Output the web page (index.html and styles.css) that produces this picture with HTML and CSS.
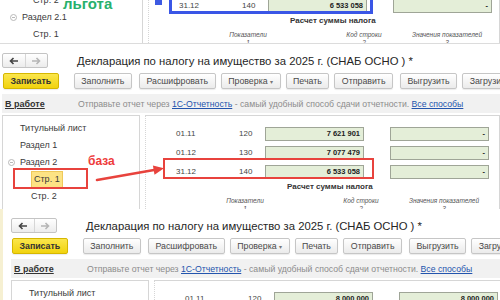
FILE: index.html
```html
<!DOCTYPE html>
<html lang="ru">
<head>
    <meta charset="UTF-8">
    <meta name="viewport" content="width=device-width, initial-scale=1.0">
    <title>Декларация по налогу на имущество</title>
    <link rel="stylesheet" href="styles.css">
</head>
<body>
<div class="page">

    <!-- Верхний снимок: льгота -->
    <div class="shot shot-top">
        <div class="panels panels-cut">
            <ul class="tree">
                <li class="node leaf">Стр. 2</li>
                <li class="node"><span class="toggle"></span>Раздел 2.1</li>
                <li class="node leaf">Стр. 1</li>
            </ul>
            <div class="sheet">
                <div class="row">
                    <span class="date">31.12</span>
                    <span class="code">140</span>
                    <span class="field">6 533 058</span>
                    <span class="field">-</span>
                </div>
                <div class="caption">Расчет суммы налога</div>
                <div class="cols">
                    <span class="col col-a">Показатели<br>1</span>
                    <span class="col col-b">Код строки<br>2</span>
                    <span class="col col-c">Значения показателей<br>3</span>
                </div>
            </div>
        </div>
        <span class="note note-green">льгота</span>
        <div class="frame frame-blue"></div>
        <div class="blue-tip"></div>
    </div>

    <!-- Средний снимок: база -->
    <div class="shot shot-mid">
        <div class="form">
            <div class="head">
                <div class="nav">
                    <span class="nav-btn">
                        <svg width="10" height="8" viewBox="0 0 10 8"><path d="M9 4H1.5M4.5 1L1.5 4l3 3" fill="none" stroke="#444" stroke-width="1.6"/></svg>
                    </span>
                    <span class="nav-btn">
                        <svg width="10" height="8" viewBox="0 0 10 8"><path d="M1 4h7.5M5.5 1l3 3-3 3" fill="none" stroke="#b5b5b5" stroke-width="1.6"/></svg>
                    </span>
                </div>
                <h1 class="title">Декларация по налогу на имущество за 2025 г. (СНАБ ОСНО ) *</h1>
            </div>
            <div class="toolbar">
                <span class="btn btn-main">Записать</span>
                <span class="btn btn-wide">Заполнить</span>
                <span class="btn">Расшифровать</span>
                <span class="btn">Проверка <span class="caret">▾</span></span>
                <span class="btn">Печать</span>
                <span class="btn btn-wide">Отправить</span>
                <span class="btn">Выгрузить</span>
                <span class="btn">Загрузить</span>
            </div>
            <div class="info">
                <span class="status">В работе</span>
                <span>Отправьте отчет через <a href="#">1С-Отчетность</a> - самый удобный способ сдачи отчетности. <a href="#">Все способы</a></span>
            </div>
            <div class="panels">
                <ul class="tree">
                    <li class="node">Титульный лист</li>
                    <li class="node">Раздел 1</li>
                    <li class="node"><span class="toggle"></span>Раздел 2</li>
                    <li class="node leaf"><span class="selected">Стр. 1</span></li>
                    <li class="node leaf">Стр. 2</li>
                </ul>
                <div class="sheet">
                    <div class="row">
                        <span class="date">01.11</span>
                        <span class="code">120</span>
                        <span class="field">7 621 901</span>
                        <span class="field">-</span>
                    </div>
                    <div class="row">
                        <span class="date">01.12</span>
                        <span class="code">130</span>
                        <span class="field">7 077 479</span>
                        <span class="field">-</span>
                    </div>
                    <div class="row">
                        <span class="date">31.12</span>
                        <span class="code">140</span>
                        <span class="field">6 533 058</span>
                        <span class="field">-</span>
                    </div>
                    <div class="caption">Расчет суммы налога</div>
                    <div class="cols">
                        <span class="col col-a">Показатели<br>1</span>
                        <span class="col col-b">Код строки<br>2</span>
                        <span class="col col-c">Значения показателей<br>3</span>
                    </div>
                </div>
            </div>
        </div>
        <div class="frame frame-tree"></div>
        <div class="frame frame-row"></div>
        <span class="note note-red">база</span>
        <svg class="arrow" width="500" height="165" viewBox="0 0 500 165">
            <path d="M97 136L154 126" stroke="#e8433d" stroke-width="2.6" stroke-linecap="round"/>
            <path d="M164 124.3L152.9 121.6L154.5 130.7Z" fill="#e8433d"/>
        </svg>
    </div>

    <!-- Нижний снимок -->
    <div class="shot shot-bottom">
        <div class="form">
            <div class="head">
                <div class="nav">
                    <span class="nav-btn">
                        <svg width="10" height="8" viewBox="0 0 10 8"><path d="M9 4H1.5M4.5 1L1.5 4l3 3" fill="none" stroke="#444" stroke-width="1.6"/></svg>
                    </span>
                    <span class="nav-btn">
                        <svg width="10" height="8" viewBox="0 0 10 8"><path d="M1 4h7.5M5.5 1l3 3-3 3" fill="none" stroke="#b5b5b5" stroke-width="1.6"/></svg>
                    </span>
                </div>
                <h1 class="title">Декларация по налогу на имущество за 2025 г. (СНАБ ОСНО ) *</h1>
            </div>
            <div class="toolbar">
                <span class="btn btn-main">Записать</span>
                <span class="btn btn-wide">Заполнить</span>
                <span class="btn">Расшифровать</span>
                <span class="btn">Проверка <span class="caret">▾</span></span>
                <span class="btn">Печать</span>
                <span class="btn btn-wide">Отправить</span>
                <span class="btn">Выгрузить</span>
                <span class="btn">Загрузить</span>
            </div>
            <div class="info">
                <span class="status">В работе</span>
                <span>Отправьте отчет через <a href="#">1С-Отчетность</a> - самый удобный способ сдачи отчетности. <a href="#">Все способы</a></span>
            </div>
            <div class="panels">
                <ul class="tree">
                    <li class="node">Титульный лист</li>
                </ul>
                <div class="sheet">
                    <div class="row">
                        <span class="date">01.11</span>
                        <span class="code">120</span>
                        <span class="field">8 000 000</span>
                        <span class="field">8 000 000</span>
                    </div>
                </div>
            </div>
        </div>
    </div>

</div>
</body>
</html>
```

FILE: styles.css
```css
* {
    box-sizing: border-box;
}
body {
    margin: 0;
    background-color: #fff;
    font-family: "Liberation Sans", Arial, sans-serif;
    color: #333;
}
.page {
    width: 500px;
    height: 300px;
    overflow: hidden;
}
.shot {
    position: relative;
    overflow: hidden;
}
.shot-top {
    height: 44px;
    border-bottom: 1px solid #dcdcdc;
}
.shot-mid {
    height: 165px;
}
.shot-bottom {
    height: 91px;
    padding-left: 6px;
    border-left: 3px solid #f6f0d2;
}
.form {
    width: 500px;
}

/* header */
.head {
    display: flex;
    align-items: center;
    padding: 9px 0 0 2px;
}
.nav {
    display: flex;
    width: 46px;
    height: 15px;
    border: 1px solid #c4c4c4;
    border-radius: 2px;
    background: linear-gradient(#fff, #ececec);
}
.nav-btn {
    flex: 1;
    display: flex;
    align-items: center;
    justify-content: center;
}
.nav-btn + .nav-btn {
    border-left: 1px solid #d6d6d6;
}
.title {
    margin: 0 0 0 29px;
    font-size: 11.3px;
    font-weight: normal;
    line-height: 14px;
    color: #262626;
    white-space: nowrap;
}

/* toolbar */
.toolbar {
    display: flex;
    gap: 5px;
    margin-top: 5px;
    padding-left: 3px;
}
.btn {
    height: 16px;
    padding: 0 6.5px;
    border: 1px solid #c6c6c6;
    border-radius: 2px;
    background: linear-gradient(#fff, #ebebeb);
    box-shadow: 0 1px 1px rgba(0, 0, 0, 0.08);
    font-size: 8.8px;
    line-height: 14px;
    color: #4a4a4a;
    white-space: nowrap;
}
.btn-main {
    margin-right: 10px;
    background: linear-gradient(#fbe64c, #f1d30e);
    border-color: #d6b700;
    font-weight: bold;
    color: #333;
}
.btn-wide {
    margin-right: 2px;
}
.caret {
    font-size: 6px;
    color: #777;
}

/* info bar */
.info {
    display: flex;
    align-items: center;
    height: 19px;
    margin: 5px 0 0 2px;
    background-color: #f1f1f1;
    font-size: 8.7px;
    color: #8c8c8c;
    white-space: nowrap;
}
.status {
    flex: none;
    width: 76px;
    padding-left: 3px;
    font-size: 9px;
    font-weight: bold;
    color: #333;
    text-decoration: underline;
}
.info a {
    color: #2354ad;
}

/* panels */
.panels {
    display: flex;
    margin-top: 2px;
}
.tree {
    flex: none;
    width: 138px;
    height: 200px;
    margin: 0 0 0 2px;
    padding: 3.5px 0 0;
    list-style: none;
    border: 1px solid #d6d6d6;
}
.node {
    height: 17px;
    padding-left: 17px;
    font-size: 9px;
    line-height: 17px;
    color: #3a3a3a;
    white-space: nowrap;
}
.node.leaf {
    padding-left: 28px;
}
.toggle {
    display: inline-block;
    width: 7px;
    height: 7px;
    margin: 0 5px 0 -12px;
    border: 1px solid #b9b9b9;
    border-radius: 50%;
    vertical-align: -1px;
    background: linear-gradient(#b9b9b9, #b9b9b9) center / 3px 1px no-repeat;
}
.selected {
    display: inline-block;
    height: 17px;
    padding: 0 2px;
    background-color: #fde384;
    border: 1px solid #efc95a;
    line-height: 15px;
}
.sheet {
    flex: 1;
    height: 200px;
    margin-left: 5px;
    padding: 8px 0 0 30px;
    border: 1px solid #d6d6d6;
    border-left-style: dotted;
}
.row {
    display: flex;
    align-items: center;
    height: 19px;
    font-size: 8px;
    color: #444;
}
.date {
    width: 63px;
}
.code {
    width: 26px;
}
.field {
    flex: none;
    width: 99px;
    height: 14px;
    padding-right: 3px;
    border: 1px solid #9fa597;
    background-color: #e4eed8;
    font-size: 7.5px;
    font-weight: bold;
    line-height: 12px;
    text-align: right;
    color: #222;
}
.field + .field {
    margin-left: 26px;
}
.caption {
    margin-left: 111px;
    font-size: 8px;
    font-weight: bold;
    line-height: 11px;
    color: #333;
}
.cols {
    display: flex;
    margin-top: 5px;
}
.col {
    width: 80px;
    font-size: 6.5px;
    font-style: italic;
    line-height: 8px;
    text-align: center;
    color: #555;
    white-space: nowrap;
}
.col-a {
    margin-left: 29px;
}
.col-b {
    margin-left: 36px;
}
.col-c {
    margin-left: 3px;
}

/* top shot: cropped panels */
.panels-cut {
    margin: -13px 0 0 3px;
}
.panels-cut .tree {
    border-left: none;
}

/* annotations */
.frame {
    position: absolute;
    border: 2px solid #e8433d;
}
.frame-tree {
    left: 13px;
    top: 124px;
    width: 75px;
    height: 21px;
}
.frame-row {
    left: 163px;
    top: 114px;
    width: 211px;
    height: 21px;
}
.frame-blue {
    left: 169px;
    top: -9px;
    width: 204px;
    height: 23px;
    border: 3px solid #3a56e6;
}
.blue-tip {
    position: absolute;
    left: 155px;
    top: 0;
    width: 7px;
    height: 5px;
    background-color: #3d5ae2;
}
.note {
    position: absolute;
    font-weight: bold;
    white-space: nowrap;
}
.note-red {
    left: 88px;
    top: 110px;
    font-size: 12px;
    color: #ee3b3b;
}
.note-green {
    left: 63px;
    top: -4px;
    font-size: 15px;
    line-height: 16px;
    color: #27b06c;
}
.arrow {
    position: absolute;
    left: 0;
    top: 0;
}
```
